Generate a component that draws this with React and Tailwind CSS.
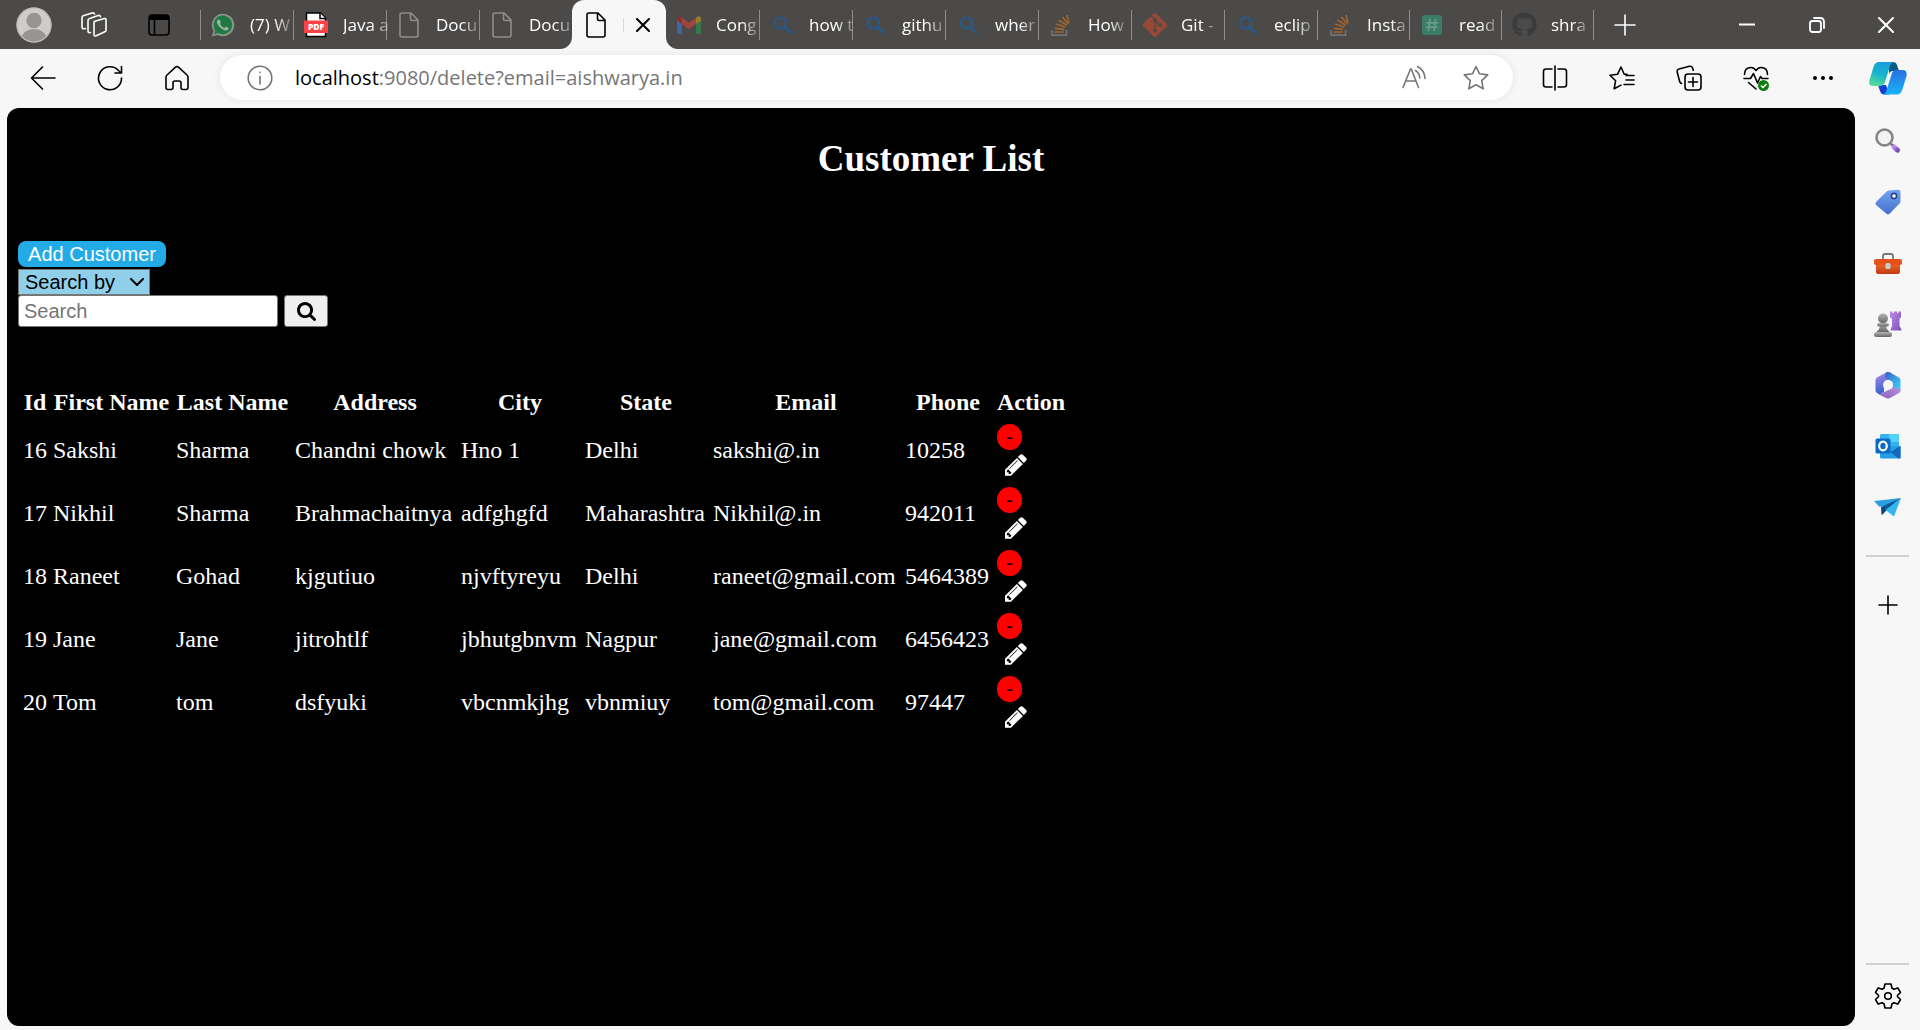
import React from "react";
import { FaGithub, FaGitAlt } from "react-icons/fa";

const line = {
  fill: "none",
  stroke: "currentColor",
  strokeWidth: 1.6,
  strokeLinecap: "round",
  strokeLinejoin: "round",
};

/* ---------- favicons ---------- */

function WhatsAppIcon() {
  return (
    <svg viewBox="0 0 24 24" className="h-6 w-6">
      <path d="M12 .8A11.1 11.1 0 0 0 2.500 17.700L.8 23.400l6-1.500A11.200 11.200 0 1 0 12 .8Z" fill="#8d918c" />
      <path d="M12 2.600a9.300 9.300 0 0 0-7.800 14.500L3.200 20.900l3.900-1A9.300 9.300 0 1 0 12 2.600Z" fill="#1f7a42" />
      <path
        d="M8.600 6.800c-.3-.6-1.400-.5-2 .3-1.500 2-.2 4.600 2.300 7.200 2.600 2.600 5.400 3.900 7.400 2.900 1.200-.6 1.500-1.700 1.200-2.300l-2.500-1.300c-.5-.2-.9 1.300-1.500 1.400-1.500-.2-4.100-2.700-4.500-4.200.1-.5 1-.9.8-1.500Z"
        fill="#9fb3a5"
      />
    </svg>
  );
}

function PdfIcon() {
  return (
    <svg viewBox="0 0 24 26" className="h-[26px] w-6">
      <path d="M2.500 1h14l5 5v18.500h-19Z" fill="#fff" stroke="#000" strokeWidth="1.500" />
      <path d="M16 1v5.500h5.500" fill="#fff" stroke="#000" strokeWidth="1.500" />
      <rect x="0" y="8.500" width="24" height="12.500" fill="#fb4345" />
      <text x="12" y="17.800" textAnchor="middle" fontFamily="Open Sans, sans-serif" fontWeight="800" fontSize="8.500" fill="#fff">
        PDF
      </text>
    </svg>
  );
}

function PageIcon() {
  return (
    <svg viewBox="0 0 20 26" className="ml-0.5 h-[26px] w-5">
      <path
        d="M3 1h9l7 7v15a2 2 0 0 1-2 2H3a2 2 0 0 1-2-2V3a2 2 0 0 1 2-2ZM11.500 1v6a1.500 1.500 0 0 0 1.500 1.500h6"
        {...line}
      />
    </svg>
  );
}

function GmailIcon() {
  return (
    <svg viewBox="0 0 24 18" className="h-[18px] w-6">
      <path d="M0 3v13.500Q0 18 1.500 18H5V6Z" fill="#41649f" />
      <path d="M19 6v12h3.500q1.500 0 1.500-1.500V3Z" fill="#39784a" />
      <path d="M19 2v6l5-3.500V3c0-2.500-2.500-3.500-4-2Z" fill="#9c7b28" />
      <path d="M0 3v1.500L5 8V2L4 1C2.500-.5 0 .5 0 3Z" fill="#873036" />
      <path d="m5 1.800 7 5.200 7-5.200V8l-7 5.200L5 8Z" fill="#a0443f" />
    </svg>
  );
}

function BingIcon() {
  return (
    <svg viewBox="0 0 24 24" className="h-6 w-6">
      <circle cx="10.500" cy="10" r="5.500" fill="none" stroke="#27598a" strokeWidth="2.200" />
      <path d="m15 14.500 5 5" stroke="#27598a" strokeWidth="2.500" strokeLinecap="round" />
    </svg>
  );
}

function StackIcon() {
  return (
    <svg viewBox="0 0 24 24" className="h-6 w-6" fill="none">
      <path d="M3 17v5.200h14.500V17" stroke="#74716f" strokeWidth="1.700" />
      <path
        d="M5.500 19h9.500M5.700 15.300l9.500 1M7 11l9.300 3M9.500 7l8.200 5.300M13.500 4l5.700 7M18 2l1.800 8.300"
        stroke="#a0632f"
        strokeWidth="1.700"
      />
    </svg>
  );
}

function GitIcon() {
  return <FaGitAlt className="-ml-px h-7 w-7 text-[#964937]" />;
}

function HashIcon() {
  return (
    <svg viewBox="0 0 20 20" className="ml-0.5 h-5 w-5">
      <rect width="20" height="20" rx="3" fill="#3b7d68" />
      <path d="M8 4 6.500 16M13.500 4 12 16M4.500 7.800h11.500M4 12.200h11.500" stroke="#6b9b8b" strokeWidth="1.800" />
    </svg>
  );
}

function GithubIcon() {
  return <FaGithub className="h-[25px] w-[25px] text-[#3a3b3c]" />;
}

const tabsBefore = [
  { label: "(7) W", Icon: WhatsAppIcon },
  { label: "Java a", Icon: PdfIcon },
  { label: "Docu", Icon: PageIcon, dim: true },
  { label: "Docu", Icon: PageIcon, dim: true },
];

const tabsAfter = [
  { label: "Cong", Icon: GmailIcon, first: true },
  { label: "how t", Icon: BingIcon },
  { label: "githu", Icon: BingIcon },
  { label: "wher", Icon: BingIcon },
  { label: "How", Icon: StackIcon },
  { label: "Git -", Icon: GitIcon },
  { label: "eclip", Icon: BingIcon },
  { label: "Insta", Icon: StackIcon, narrow: true },
  { label: "read", Icon: HashIcon, narrow: true },
  { label: "shra", Icon: GithubIcon, narrow: true },
];

function Tab({ label, Icon, dim, first, narrow }) {
  return (
    <button
      type="button"
      className={"flex h-full shrink-0 items-center text-left text-white " + (narrow ? "w-[92px]" : "w-[93px]")}
    >
      <span className={"h-[30px] w-px shrink-0 " + (first ? "bg-transparent" : "bg-[#8f8d8b]")} />
      <span className={"ml-2.5 flex w-[39px] shrink-0 items-center " + (dim ? "text-[#8f8d8b]" : "")}>
        <Icon />
      </span>
      <span className="whitespace-nowrap text-[17px] leading-6 [mask-image:linear-gradient(to_right,black_60%,rgba(0,0,0,0.3))]">
        {label}
      </span>
    </button>
  );
}

function ActiveTab() {
  return (
    <div className="relative flex h-full w-[94px] shrink-0 items-center rounded-t-xl bg-[#f7f7f7] pl-3 text-black">
      <svg viewBox="0 0 12 12" className="absolute bottom-0 -left-3 h-3 w-3">
        <path d="M12 0v12H0A12 12 0 0 0 12 0Z" fill="#f7f7f7" />
      </svg>
      <svg viewBox="0 0 12 12" className="absolute -right-3 bottom-0 h-3 w-3">
        <path d="M0 0v12h12A12 12 0 0 1 0 0Z" fill="#f7f7f7" />
      </svg>
      <PageIcon />
      <span className="ml-[17px] h-3.5 w-px bg-[#d9d9d9]" />
      <button type="button" aria-label="Close tab" className="ml-3">
        <svg viewBox="0 0 14 14" className="h-3.5 w-3.5">
          <path d="m1 1 12 12M13 1 1 13" {...line} strokeWidth="2" />
        </svg>
      </button>
    </div>
  );
}

function TitleBar() {
  return (
    <header className="flex h-[49px] items-center bg-[#4c4a48] text-white">
      <button type="button" aria-label="Profile" className="ml-4 shrink-0">
        <svg viewBox="0 0 36 36" className="h-9 w-9">
          <defs>
            <clipPath id="avatar">
              <circle cx="18" cy="18" r="17" />
            </clipPath>
          </defs>
          <circle cx="18" cy="18" r="17.500" fill="#cfcdcb" />
          <g clipPath="url(#avatar)" fill="#979593">
            <circle cx="18" cy="13.500" r="7.700" />
            <path d="M4 36c1-10 7-14 14-14s13 4 14 14Z" />
          </g>
          <circle cx="18" cy="18" r="17" fill="none" stroke="#bab8b5" strokeWidth="1.200" />
        </svg>
      </button>
      <button type="button" aria-label="Workspaces" className="ml-[29px] shrink-0">
        <svg viewBox="0 0 26 26" className="h-[26px] w-[26px]">
          <g {...line}>
            <path d="M13 9.500 23.500 6.500q1.500-.3 1.500 1.200v10.500q0 1.200-1.200 1.600l-8.500 4q-2.300.9-2.300-1.500V11q0-1.200 1-1.500Z" />
            <path d="m9.500 20.500-1.200.2Q7 20.500 7 19V8.500q0-1.300 1.200-1.700L17 3.500q2-.6 2.500 1.200" />
            <path d="M4.500 16.500 3 16.800Q1 17 1 15V5.500Q1 4.200 2.200 3.800L11 1q2-.5 2.500 1" />
          </g>
        </svg>
      </button>
      <button type="button" aria-label="Tab actions" className="ml-[41px] shrink-0 text-black">
        <svg viewBox="0 0 22 22" className="h-[22px] w-[22px]">
          <rect x="1" y="1" width="20" height="20" rx="3" {...line} />
          <path d="M1 6V4q0-3 3-3h14q3 0 3 3v2Z" fill="currentColor" />
          <path d="M6.500 6v15" {...line} />
        </svg>
      </button>
      <nav aria-label="Tabs" className="ml-[30px] flex h-full items-center">
        {tabsBefore.map((tab, i) => (
          <Tab key={i} {...tab} />
        ))}
        <ActiveTab />
        {tabsAfter.map((tab, i) => (
          <Tab key={i} {...tab} />
        ))}
        <span className="h-[30px] w-px bg-[#8f8d8b]" />
      </nav>
      <button type="button" aria-label="New tab" className="ml-5 shrink-0">
        <svg viewBox="0 0 22 22" className="h-[22px] w-[22px]">
          <path d="M11 1v20M1 11h20" {...line} />
        </svg>
      </button>
      <div className="ml-auto flex shrink-0">
        <button type="button" aria-label="Minimize" className="flex w-[70px] justify-center">
          <svg viewBox="0 0 16 16" className="h-4 w-4">
            <path d="M0 7.500h16" stroke="currentColor" strokeWidth="2" />
          </svg>
        </button>
        <button type="button" aria-label="Restore" className="flex w-[70px] justify-center">
          <svg viewBox="0 0 16 16" className="h-4 w-4">
            <rect x="1" y="4" width="11" height="11" rx="2.500" {...line} strokeWidth="1.800" />
            <path d="M5 1h6q4 0 4 4v6" {...line} strokeWidth="1.800" />
          </svg>
        </button>
        <button type="button" aria-label="Close" className="flex w-[68px] justify-center">
          <svg viewBox="0 0 16 16" className="h-4 w-4">
            <path d="m1 1 14 14M15 1 1 15" {...line} strokeWidth="2" />
          </svg>
        </button>
      </div>
    </header>
  );
}

/* ---------- toolbar ---------- */

function ToolButton({ label, children }) {
  return (
    <button type="button" aria-label={label} className="flex w-[67px] shrink-0 items-center justify-center">
      <svg viewBox="0 0 26 26" className="h-[26px] w-[26px]">
        {children}
      </svg>
    </button>
  );
}

function Copilot() {
  return (
    <svg viewBox="0 0 38 34" className="h-[34px] w-[38px]">
      <defs>
        <linearGradient id="cpA" x1=".6" y1="0" x2=".3" y2="1">
          <stop offset="0" stopColor="#1b9ddb" />
          <stop offset=".5" stopColor="#16b3cf" />
          <stop offset="1" stopColor="#56dc93" />
        </linearGradient>
        <linearGradient id="cpB" x1=".5" y1="0" x2=".5" y2="1">
          <stop offset="0" stopColor="#2a6fe0" />
          <stop offset="1" stopColor="#17b4fb" />
        </linearGradient>
      </defs>
      <path d="M20 1h4q3 0 4 3l2 6h-6q-3 0-4 3Z" fill="#0c5a86" />
      <path d="M9 24l2 6q1 3.500 4.500 3.500H20l-3-9.500Z" fill="#1241cf" />
      <path d="M10 1h14q-2 1-3 4l-5 16q-1 4-5 4H4q-5 0-3.500-6l4-13Q6 1 10 1Z" fill="url(#cpA)" />
      <path d="M28 33.500H14q2.500-.5 3.500-4l5-16q1-4.500 5-4.500h6q5 0 4 6l-4 13q-1.500 5.500-5.500 5.500Z" fill="url(#cpB)" />
    </svg>
  );
}

function Toolbar() {
  return (
    <div className="flex h-[59px] items-center bg-[#f7f7f7] pb-0.5 pl-[9px] text-black">
      <ToolButton label="Back">
        <path d="M25 13H1.500M12.500 2 1.500 13l11 11" {...line} />
      </ToolButton>
      <ToolButton label="Refresh">
        <path d="M24.500 13A11.500 11.500 0 1 1 21.500 5.500L24 8M24.500 1.500V8H18" {...line} />
      </ToolButton>
      <ToolButton label="Home">
        <path
          d="M3 10 11.500 2.200q1.500-1.200 3 0L23 10q1 .8 1 2v10.500q0 2-2 2h-3q-2 0-2-2V18q0-2-2-2h-4q-2 0-2 2v4.500q0 2-2 2H4q-2 0-2-2V12q0-1.200 1-2Z"
          {...line}
        />
      </ToolButton>
      <div className="mr-2 ml-2.5 flex h-[45px] min-w-0 flex-1 items-center rounded-full bg-white pr-6 pl-[27px] text-[#767676] shadow-[0_0_8px_rgba(0,0,0,0.08)]">
        <svg viewBox="0 0 26 26" className="h-[26px] w-[26px] shrink-0">
          <circle cx="13" cy="13" r="11.800" {...line} />
          <path d="M13 11.500V19M13 7.200v.3" {...line} />
        </svg>
        <div className="ml-[22px] flex-1 whitespace-nowrap text-xl leading-7">
          <span className="text-black">localhost</span>:9080/delete?email=aishwarya.in
        </div>
        <button type="button" aria-label="Read aloud" className="mr-9">
          <svg viewBox="0 0 26 26" className="h-[26px] w-[26px]">
            <path d="M2 22.500 9.500 4h.8L17.500 22.500M5 16h10M14.500 5.500q4 2.500 4.300 7.500M16.500 1.500q7 3.500 7.500 12" {...line} />
          </svg>
        </button>
        <button type="button" aria-label="Favorite this page">
          <svg viewBox="0 0 26 26" className="h-[26px] w-[26px]">
            <path
              d="m13 1.500 3.500 7.300 8.200 1.100-6 5.700 1.500 8.200-7.200-4-7.200 4 1.500-8.200-6-5.700 8.200-1.100Z"
              {...line}
            />
          </svg>
        </button>
      </div>
      <ToolButton label="Split screen">
        <path d="M10 4H4Q1.500 4 1.500 6.500v13Q1.500 22 4 22h6M16 4h6q2.500 0 2.500 2.500v13q0 2.500-2.500 2.500h-6M13 1v24" {...line} />
      </ToolButton>
      <ToolButton label="Favorites">
        <path d="M18 9.200h-2.800L12 2 8.600 9.200l-7.600 1 5.600 5.500-1.400 8 6.800-3.600M17 10.500h8M17 15h8M15 19.500h10" {...line} />
      </ToolButton>
      <ToolButton label="Collections">
        <rect x="9" y="9" width="16" height="16" rx="3" {...line} />
        <path d="M17 12.500v9M12.500 17h9M5.500 18.500Q4 18 3.500 16L1.200 7Q.8 4.500 3 4l10.500-2.700q2.500-.5 3.200 2l.5 2" {...line} />
      </ToolButton>
      <ToolButton label="Browser essentials">
        <path d="M1.500 9.500Q1.500 2.500 8 2.500q3 0 5 3 2-3 5-3 6.500 0 6.500 7M1 13.500h6.500l3-5 4 9.500 3-6.500 1.500 2h6M5.500 17.500l7.500 6.500" {...line} />
        <circle cx="20.500" cy="20.500" r="5.500" fill="#107c10" />
        <path d="m18 20.500 2 2 3.500-3.500" fill="none" stroke="#fff" strokeWidth="1.500" />
      </ToolButton>
      <ToolButton label="Settings and more">
        <circle cx="5" cy="13" r="2" />
        <circle cx="13" cy="13" r="2" />
        <circle cx="21" cy="13" r="2" />
      </ToolButton>
      <button type="button" aria-label="Copilot" className="flex w-16 shrink-0 justify-center">
        <Copilot />
      </button>
    </div>
  );
}

/* ---------- right sidebar ---------- */

function SideButton({ label, children }) {
  return (
    <button type="button" aria-label={label} className="flex h-[61px] shrink-0 items-center justify-center">
      <svg viewBox="0 0 28 28" className="h-7 w-7">
        {children}
      </svg>
    </button>
  );
}

function Sidebar() {
  return (
    <aside className="flex w-[65px] shrink-0 flex-col pt-0.5">
      <svg className="h-0 w-0">
        <defs>
          <linearGradient id="sPurple" x1="0" y1="0" x2="1" y2="1">
            <stop offset="0" stopColor="#c08be8" />
            <stop offset="1" stopColor="#7a4fb5" />
          </linearGradient>
          <linearGradient id="sGrey" x1="0" y1="0" x2="0" y2="1">
            <stop offset="0" stopColor="#b5b5b5" />
            <stop offset="1" stopColor="#666" />
          </linearGradient>
          <linearGradient id="sBlue" x1="0" y1="0" x2="0" y2="1">
            <stop offset="0" stopColor="#74a5ee" />
            <stop offset="1" stopColor="#4370cf" />
          </linearGradient>
          <linearGradient id="sRed" x1="0" y1="0" x2="0" y2="1">
            <stop offset="0" stopColor="#f06a2a" />
            <stop offset="1" stopColor="#c13a12" />
          </linearGradient>
          <linearGradient id="sCyan" x1="0" y1="0" x2="1" y2="1">
            <stop offset="0" stopColor="#2a5fb8" />
            <stop offset=".45" stopColor="#3a9ae6" />
            <stop offset="1" stopColor="#4ad5fa" />
          </linearGradient>
          <linearGradient id="sIndigo" x1=".3" y1="0" x2=".5" y2="1">
            <stop offset="0" stopColor="#a884e6" />
            <stop offset="1" stopColor="#2f62cc" />
          </linearGradient>
          <linearGradient id="sOrchid" x1="0" y1="1" x2="1" y2="0">
            <stop offset="0" stopColor="#8a5fc0" />
            <stop offset="1" stopColor="#bd8fdd" />
          </linearGradient>
        </defs>
      </svg>
      <SideButton label="Search">
        <circle cx="10.500" cy="10.500" r="8" fill="#f3f3f5" stroke="#858585" strokeWidth="2.600" />
        <path d="m17 17 2.500 2" stroke="#666" strokeWidth="2.500" />
        <path d="m20 20 3.500 3.200" stroke="url(#sPurple)" strokeWidth="5" strokeLinecap="round" />
      </SideButton>
      <SideButton label="Shopping">
        <path d="M14.500 2.500 24 1.800q2.500 0 2.500 2.500V13q0 1.500-1 2.500l-10 10.300q-1.500 1.200-3 0L2 17q-1.200-1.500 0-3L13 3.200Z" fill="url(#sBlue)" />
        <circle cx="20" cy="8" r="2.600" fill="#fff" stroke="#29458f" strokeWidth="1.600" />
      </SideButton>
      <SideButton label="Tools">
        <path d="M9 10V7q0-2 2-2h6q2 0 2 2v3" fill="none" stroke="#777" strokeWidth="1.800" />
        <path d="M2 14h24v9q0 2-2 2H4q-2 0-2-2Z" fill="url(#sRed)" />
        <rect x="0" y="10" width="28" height="6" rx="2" fill="#e45118" />
        <rect x="11.500" y="14" width="5" height="6" rx="1.500" fill="#c9ccce" />
      </SideButton>
      <SideButton label="Games">
        <g fill="url(#sGrey)">
          <circle cx="9" cy="8.500" r="5" />
          <path d="M6 13h6v3q0 3 3.500 6h-13Q6 19 6 16Z" />
          <rect x="3" y="13" width="12" height="3.500" rx="1.700" />
          <rect x="0" y="22" width="18" height="5" rx="2.500" />
        </g>
        <path d="M16 1.500h2.500V3H20V1.500h3V3h1.500V1.500H27V7l-1.500 2v7l2 3.500q0 1-1 1H17.500q-1 0-1-1l1.500-3.500V9L16 7Z" fill="url(#sPurple)" />
      </SideButton>
      <SideButton label="Microsoft 365">
        <path d="M12.500 1.200 3 6.500Q1.500 7.500 1.500 9v10q0 2 1.500 3l2.500 1.500L10 21V11l7-4V1.500Z" fill="url(#sIndigo)" />
        <path d="M12 1.500q2-1 4 0l9 5q1.500 1 1.500 2.500v10q0 1-.5 1.500L18.500 17v-6L11 7Z" fill="url(#sCyan)" />
        <path d="m5 23.500 5.500-2.500 8-4.500 8 1.500v1.500q0 1.700-1.500 2.500l-9 5q-2 1-4 0Z" fill="url(#sOrchid)" />
        <circle cx="14" cy="14" r="5" fill="#f7f7f7" />
      </SideButton>
      <SideButton label="Outlook">
        <rect x="6" y="2" width="19" height="15" rx="1.500" fill="#37b2f0" />
        <path d="M15 2h10v8H15Z" fill="#52d2fb" />
        <path d="M6 14h20.500v11q0 1.500-1.500 1.500H7.500Q6 26.500 6 25Z" fill="#249ee6" />
        <path d="m26.500 14-10 6 8 6.500h2Z" fill="#1269b5" />
        <rect x="1.500" y="6.500" width="15" height="15" rx="1.500" fill="#0c6cc5" />
        <ellipse cx="9" cy="14" rx="3.800" ry="4.300" fill="none" stroke="#fff" strokeWidth="2.200" />
      </SideButton>
      <SideButton label="Drop">
        <path d="M0 8 27 5 13 14 5 13.500Z" fill="#2aa0df" />
        <path d="M7 14 27 5 12.500 17.500 8 22Z" fill="#0d5799" />
        <path d="M27 5 11.500 17l8.500 6.500Z" fill="#35b7ee" />
        <path d="m11.500 17-4 5V14Z" fill="#123f78" />
      </SideButton>
      <div className="mx-auto mt-[18px] h-0.5 w-[43px] bg-[#d0d0d0]" />
      <button type="button" aria-label="Customize" className="mt-[38px] flex justify-center">
        <svg viewBox="0 0 20 20" className="h-5 w-5">
          <path d="M10 1v18M1 10h18" {...line} />
        </svg>
      </button>
      <div className="mx-auto mt-auto h-0.5 w-[43px] bg-[#d0d0d0]" />
      <SideButton label="Settings">
        <path
          d="M11 2h6l1 4.200 1.800 1 4-1.300 2.700 4.600-3 2.800v1.400l3 2.800-2.700 4.600-4-1.300-1.800 1L17 26h-6l-1-4.200-1.800-1-4 1.300-2.700-4.600 3-2.800v-1.400l-3-2.800 2.700-4.600 4 1.300 1.800-1Z"
          {...line}
        />
        <circle cx="14" cy="14" r="3.300" {...line} />
      </SideButton>
    </aside>
  );
}

/* ---------- page content ---------- */

const columns = [
  { name: "Id", width: "w-[26px]" },
  { name: "First Name", width: "w-[119px]" },
  { name: "Last Name", width: "w-[115px]" },
  { name: "Address", width: "w-[162px]" },
  { name: "City", width: "w-[120px]" },
  { name: "State", width: "w-[124px]" },
  { name: "Email", width: "w-[188px]" },
  { name: "Phone", width: "w-[88px]" },
  { name: "Action", width: "w-[70px]" },
];

const customers = [
  ["16", "Sakshi", "Sharma", "Chandni chowk", "Hno 1", "Delhi", "sakshi@.in", "10258"],
  ["17", "Nikhil", "Sharma", "Brahmachaitnya", "adfghgfd", "Maharashtra", "Nikhil@.in", "942011"],
  ["18", "Raneet", "Gohad", "kjgutiuo", "njvftyreyu", "Delhi", "raneet@gmail.com", "5464389"],
  ["19", "Jane", "Jane", "jitrohtlf", "jbhutgbnvm", "Nagpur", "jane@gmail.com", "6456423"],
  ["20", "Tom", "tom", "dsfyuki", "vbcnmkjhg", "vbnmiuy", "tom@gmail.com", "97447"],
];

function CustomerPage() {
  return (
    <main className="min-w-0 flex-1 rounded-xl bg-black px-[11px] pb-8 font-['Liberation_Serif',serif] text-2xl text-white">
      <h2 className="pt-[30px] text-center text-[37px] leading-[42px] font-bold">Customer List</h2>
      <div className="mt-[61px] font-['Liberation_Sans',sans-serif] text-xl">
        <button type="button" className="block h-[26px] w-[148px] rounded-lg bg-[#22abe6] leading-[26px] text-white">
          Add Customer
        </button>
        <div className="relative mt-0.5 w-fit">
          <select
            aria-label="Search by"
            className="block h-[26px] w-[132px] appearance-none border border-[#767676] bg-[#8fcfe9] pl-1.5 leading-6 text-black"
          >
            <option>Search by</option>
            <option>First Name</option>
            <option>City</option>
            <option>Email</option>
            <option>Phone</option>
          </select>
          <svg viewBox="0 0 14 8" className="pointer-events-none absolute top-[9px] right-1.5 h-2 w-3.5 text-black">
            <path d="m1 1 6 6 6-6" {...line} strokeWidth="2" />
          </svg>
        </div>
        <form className="flex gap-1.5" onSubmit={(e) => e.preventDefault()}>
          <input
            type="text"
            aria-label="Search"
            placeholder="Search"
            className="h-8 w-[260px] rounded-[3px] border border-[#767676] bg-white px-[5px] text-black placeholder:text-[#757575]"
          />
          <button
            type="submit"
            aria-label="Search"
            className="flex h-8 w-11 items-center justify-center rounded-[3px] border border-[#767676] bg-[#efefef] text-black"
          >
            <svg viewBox="64 128 1664 1664" className="h-[19px] w-[19px]" fill="currentColor">
              <path d="M1216 832q0-185-131.500-316.500t-316.500-131.500-316.500 131.500-131.500 316.500 131.500 316.500 316.500 131.500 316.500-131.500 131.500-316.500zm512 832q0 52-38 90t-90 38q-54 0-90-38l-343-342q-179 124-399 124-143 0-273.500-55.500t-225-150-150-225-55.500-273.500 55.500-273.500 150-225 225-150 273.500-55.500 273.500 55.500 225 150 150 225 55.500 273.500q0 220-124 399l343 343q37 37 37 90z" />
            </svg>
          </button>
        </form>
      </div>
      <table className="mt-[57px] border-separate border-spacing-1 whitespace-nowrap">
        <colgroup>
          {columns.map((c) => (
            <col key={c.name} className={c.width} />
          ))}
        </colgroup>
        <thead>
          <tr>
            {columns.map((c) => (
              <th key={c.name} className="px-px text-center leading-7 font-bold">
                {c.name}
              </th>
            ))}
          </tr>
        </thead>
        <tbody>
          {customers.map((row) => (
            <tr key={row[0]} className="h-[59px]">
              {row.map((cell, i) => (
                <td key={i} className="px-px">
                  {cell}
                </td>
              ))}
              <td className="px-px">
                <div className="flex flex-col items-start gap-1">
                  <button
                    type="button"
                    aria-label={"Delete " + row[1]}
                    className="h-[26px] w-[25px] rounded-full bg-[#ff0000] font-['Liberation_Sans',sans-serif] text-xl leading-[26px] text-black"
                  >
                    -
                  </button>
                  <button type="button" aria-label={"Edit " + row[1]} className="ml-2">
                    <svg viewBox="128 140 1536 1536" className="h-[22px] w-[22px]" fill="currentColor">
                      <path d="M491 1536l91-91-235-235-91 91v107h128v128h107zm523-928q0-22-22-22-10 0-17 7l-542 542q-7 7-7 17 0 22 22 22 10 0 17-7l542-542q7-7 7-17zm-54-192l416 416-832 832h-416v-416zm683 96q0 53-37 90l-166 166-416-416 166-165q36-38 90-38 53 0 91 38l235 234q37 39 37 91z" />
                    </svg>
                  </button>
                </div>
              </td>
            </tr>
          ))}
        </tbody>
      </table>
    </main>
  );
}

export default function App() {
  return (
    <div className="flex min-h-screen flex-col bg-[#f7f7f7] font-['Open_Sans',sans-serif]">
      <TitleBar />
      <Toolbar />
      <div className="flex flex-1 pb-1 pl-[7px]">
        <CustomerPage />
        <Sidebar />
      </div>
    </div>
  );
}
